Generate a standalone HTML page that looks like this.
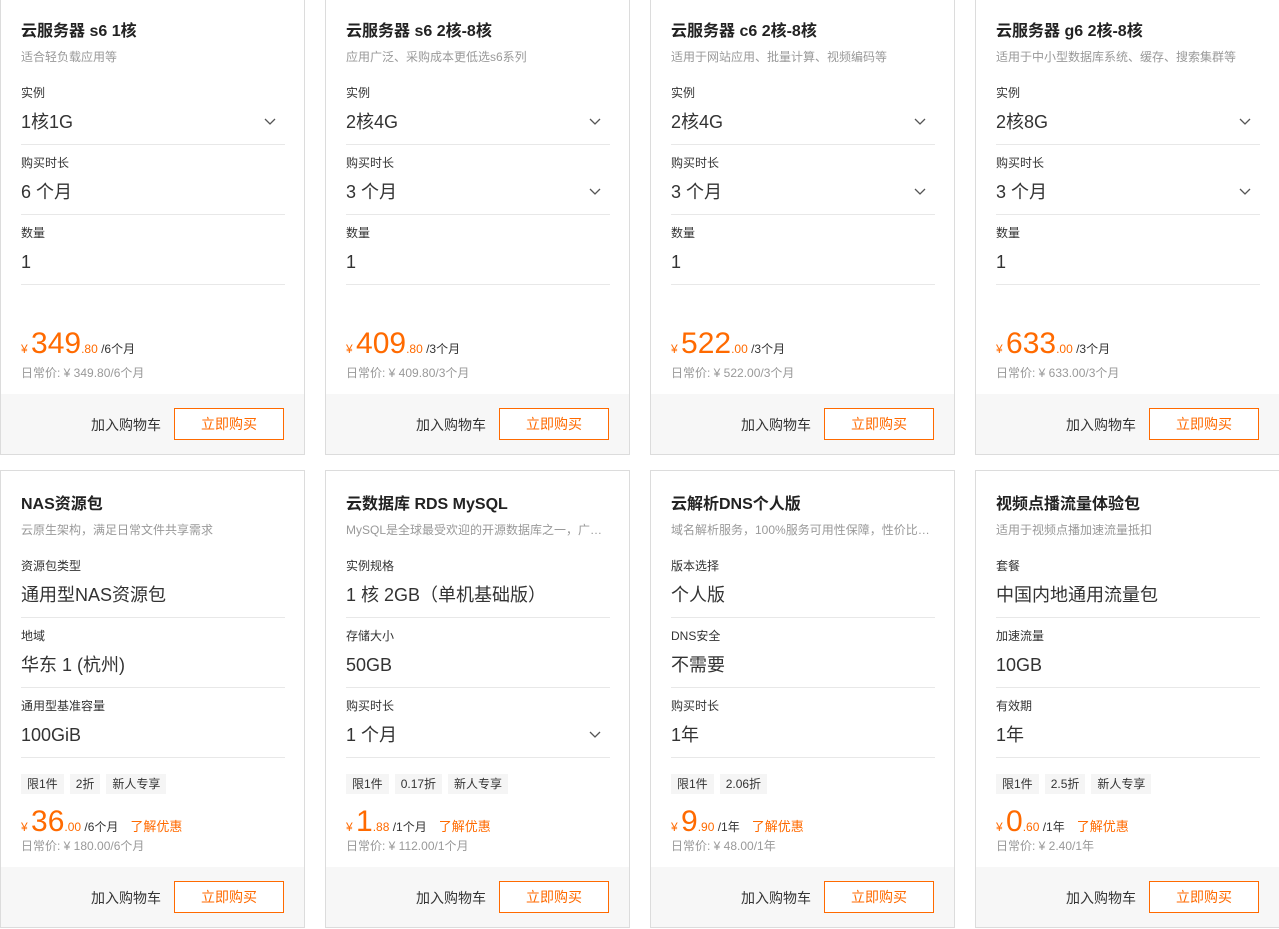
<!DOCTYPE html>
<html><head><meta charset="utf-8"><style>
*{margin:0;padding:0;box-sizing:border-box}
body{width:1279px;height:929px;background:#fff;overflow:hidden;position:relative;font-family:"Liberation Sans","Noto Sans CJK SC",sans-serif;color:#333}
.c{position:absolute;width:305px;height:458px;border:1px solid #dcdcdc;background:#fff}
.c>*{position:absolute;white-space:nowrap}
.t{left:20px;top:24px;font-size:16px;font-weight:bold;line-height:20px;color:#222}
.s{left:20px;top:51px;font-size:12px;line-height:16px;color:#999}
.l{left:20px;font-size:12px;line-height:16px;color:#333}
.v{left:20px;font-size:18px;line-height:24px;color:#333}
.d{left:20px;width:264px;height:1px;background:#e8e8e8}
.ch{left:263px;width:12px;height:8px}
.tags{left:20px;top:303px;display:flex;gap:6px}
.tags span{background:#f5f5f5;font-size:12px;line-height:20px;padding:0 6px;color:#333}
.p{left:20px;font-size:12px;color:#ff6a00;line-height:30px}
.p b{font-weight:normal;font-size:30px}
.p i{font-style:normal;color:#333}
.p u{text-decoration:none;margin-left:12px;font-size:13px}
.dp{left:20px;top:367px;font-size:12px;line-height:16px;color:#999}
.f{left:0;top:396px;width:303px;height:60px;background:#f7f7f7}
.cart{left:90px;top:418px;font-size:14px;line-height:18px;color:#333}
.buy{left:173px;top:410px;width:110px;height:32px;border:1px solid #ff6a00;color:#ff6a00;font-size:14px;line-height:30px;text-align:center;background:#fff}
</style></head><body>

<div class="c" style="left:0;top:-3px">
<div class="t">云服务器 s6 1核</div><div class="s">适合轻负载应用等</div>
<div class="l" style="top:87px">实例</div><div class="v" style="top:112px">1核1G</div>
<svg class="ch" style="top:120px" viewBox="0 0 12 8"><path d="M1 1L6 6L11 1" fill="none" stroke="#555" stroke-width="1.3"/></svg>
<div class="d" style="top:146px"></div>
<div class="l" style="top:157px">购买时长</div><div class="v" style="top:182px">6 个月</div>
<div class="d" style="top:216px"></div>
<div class="l" style="top:227px">数量</div><div class="v" style="top:252px">1</div>
<div class="d" style="top:286px"></div>
<div class="p" style="top:331px">¥ <b>349</b>.80 <i>/6个月</i></div>
<div class="dp">日常价: ¥ 349.80/6个月</div>
<div class="f"></div><div class="cart">加入购物车</div><div class="buy">立即购买</div>
</div>

<div class="c" style="left:325px;top:-3px">
<div class="t">云服务器 s6 2核-8核</div><div class="s">应用广泛、采购成本更低选s6系列</div>
<div class="l" style="top:87px">实例</div><div class="v" style="top:112px">2核4G</div>
<svg class="ch" style="top:120px" viewBox="0 0 12 8"><path d="M1 1L6 6L11 1" fill="none" stroke="#555" stroke-width="1.3"/></svg>
<div class="d" style="top:146px"></div>
<div class="l" style="top:157px">购买时长</div><div class="v" style="top:182px">3 个月</div>
<svg class="ch" style="top:190px" viewBox="0 0 12 8"><path d="M1 1L6 6L11 1" fill="none" stroke="#555" stroke-width="1.3"/></svg>
<div class="d" style="top:216px"></div>
<div class="l" style="top:227px">数量</div><div class="v" style="top:252px">1</div>
<div class="d" style="top:286px"></div>
<div class="p" style="top:331px">¥ <b>409</b>.80 <i>/3个月</i></div>
<div class="dp">日常价: ¥ 409.80/3个月</div>
<div class="f"></div><div class="cart">加入购物车</div><div class="buy">立即购买</div>
</div>

<div class="c" style="left:650px;top:-3px">
<div class="t">云服务器 c6 2核-8核</div><div class="s">适用于网站应用、批量计算、视频编码等</div>
<div class="l" style="top:87px">实例</div><div class="v" style="top:112px">2核4G</div>
<svg class="ch" style="top:120px" viewBox="0 0 12 8"><path d="M1 1L6 6L11 1" fill="none" stroke="#555" stroke-width="1.3"/></svg>
<div class="d" style="top:146px"></div>
<div class="l" style="top:157px">购买时长</div><div class="v" style="top:182px">3 个月</div>
<svg class="ch" style="top:190px" viewBox="0 0 12 8"><path d="M1 1L6 6L11 1" fill="none" stroke="#555" stroke-width="1.3"/></svg>
<div class="d" style="top:216px"></div>
<div class="l" style="top:227px">数量</div><div class="v" style="top:252px">1</div>
<div class="d" style="top:286px"></div>
<div class="p" style="top:331px">¥ <b>522</b>.00 <i>/3个月</i></div>
<div class="dp">日常价: ¥ 522.00/3个月</div>
<div class="f"></div><div class="cart">加入购物车</div><div class="buy">立即购买</div>
</div>

<div class="c" style="left:975px;top:-3px">
<div class="t">云服务器 g6 2核-8核</div><div class="s">适用于中小型数据库系统、缓存、搜索集群等</div>
<div class="l" style="top:87px">实例</div><div class="v" style="top:112px">2核8G</div>
<svg class="ch" style="top:120px" viewBox="0 0 12 8"><path d="M1 1L6 6L11 1" fill="none" stroke="#555" stroke-width="1.3"/></svg>
<div class="d" style="top:146px"></div>
<div class="l" style="top:157px">购买时长</div><div class="v" style="top:182px">3 个月</div>
<svg class="ch" style="top:190px" viewBox="0 0 12 8"><path d="M1 1L6 6L11 1" fill="none" stroke="#555" stroke-width="1.3"/></svg>
<div class="d" style="top:216px"></div>
<div class="l" style="top:227px">数量</div><div class="v" style="top:252px">1</div>
<div class="d" style="top:286px"></div>
<div class="p" style="top:331px">¥ <b>633</b>.00 <i>/3个月</i></div>
<div class="dp">日常价: ¥ 633.00/3个月</div>
<div class="f"></div><div class="cart">加入购物车</div><div class="buy">立即购买</div>
</div>

<div class="c" style="left:0;top:470px">
<div class="t">NAS资源包</div><div class="s">云原生架构，满足日常文件共享需求</div>
<div class="l" style="top:87px">资源包类型</div><div class="v" style="top:112px">通用型NAS资源包</div>
<div class="d" style="top:146px"></div>
<div class="l" style="top:157px">地域</div><div class="v" style="top:182px">华东 1 (杭州)</div>
<div class="d" style="top:216px"></div>
<div class="l" style="top:227px">通用型基准容量</div><div class="v" style="top:252px">100GiB</div>
<div class="d" style="top:286px"></div>
<div class="tags"><span>限1件</span><span>2折</span><span>新人专享</span></div>
<div class="p" style="top:336px">¥ <b>36</b>.00 <i>/6个月</i><u>了解优惠</u></div>
<div class="dp" style="top:367px">日常价: ¥ 180.00/6个月</div>
<div class="f"></div><div class="cart">加入购物车</div><div class="buy">立即购买</div>
</div>

<div class="c" style="left:325px;top:470px">
<div class="t">云数据库 RDS MySQL</div><div class="s">MySQL是全球最受欢迎的开源数据库之一，广…</div>
<div class="l" style="top:87px">实例规格</div><div class="v" style="top:112px">1 核 2GB（单机基础版）</div>
<div class="d" style="top:146px"></div>
<div class="l" style="top:157px">存储大小</div><div class="v" style="top:182px">50GB</div>
<div class="d" style="top:216px"></div>
<div class="l" style="top:227px">购买时长</div><div class="v" style="top:252px">1 个月</div>
<svg class="ch" style="top:260px" viewBox="0 0 12 8"><path d="M1 1L6 6L11 1" fill="none" stroke="#555" stroke-width="1.3"/></svg>
<div class="d" style="top:286px"></div>
<div class="tags"><span>限1件</span><span>0.17折</span><span>新人专享</span></div>
<div class="p" style="top:336px">¥ <b>1</b>.88 <i>/1个月</i><u>了解优惠</u></div>
<div class="dp">日常价: ¥ 112.00/1个月</div>
<div class="f"></div><div class="cart">加入购物车</div><div class="buy">立即购买</div>
</div>

<div class="c" style="left:650px;top:470px">
<div class="t">云解析DNS个人版</div><div class="s">域名解析服务，100%服务可用性保障，性价比…</div>
<div class="l" style="top:87px">版本选择</div><div class="v" style="top:112px">个人版</div>
<div class="d" style="top:146px"></div>
<div class="l" style="top:157px">DNS安全</div><div class="v" style="top:182px">不需要</div>
<div class="d" style="top:216px"></div>
<div class="l" style="top:227px">购买时长</div><div class="v" style="top:252px">1年</div>
<div class="d" style="top:286px"></div>
<div class="tags"><span>限1件</span><span>2.06折</span></div>
<div class="p" style="top:336px">¥ <b>9</b>.90 <i>/1年</i><u>了解优惠</u></div>
<div class="dp">日常价: ¥ 48.00/1年</div>
<div class="f"></div><div class="cart">加入购物车</div><div class="buy">立即购买</div>
</div>

<div class="c" style="left:975px;top:470px">
<div class="t">视频点播流量体验包</div><div class="s">适用于视频点播加速流量抵扣</div>
<div class="l" style="top:87px">套餐</div><div class="v" style="top:112px">中国内地通用流量包</div>
<div class="d" style="top:146px"></div>
<div class="l" style="top:157px">加速流量</div><div class="v" style="top:182px">10GB</div>
<div class="d" style="top:216px"></div>
<div class="l" style="top:227px">有效期</div><div class="v" style="top:252px">1年</div>
<div class="d" style="top:286px"></div>
<div class="tags"><span>限1件</span><span>2.5折</span><span>新人专享</span></div>
<div class="p" style="top:336px">¥ <b>0</b>.60 <i>/1年</i><u>了解优惠</u></div>
<div class="dp">日常价: ¥ 2.40/1年</div>
<div class="f"></div><div class="cart">加入购物车</div><div class="buy">立即购买</div>
</div>

</body></html>
